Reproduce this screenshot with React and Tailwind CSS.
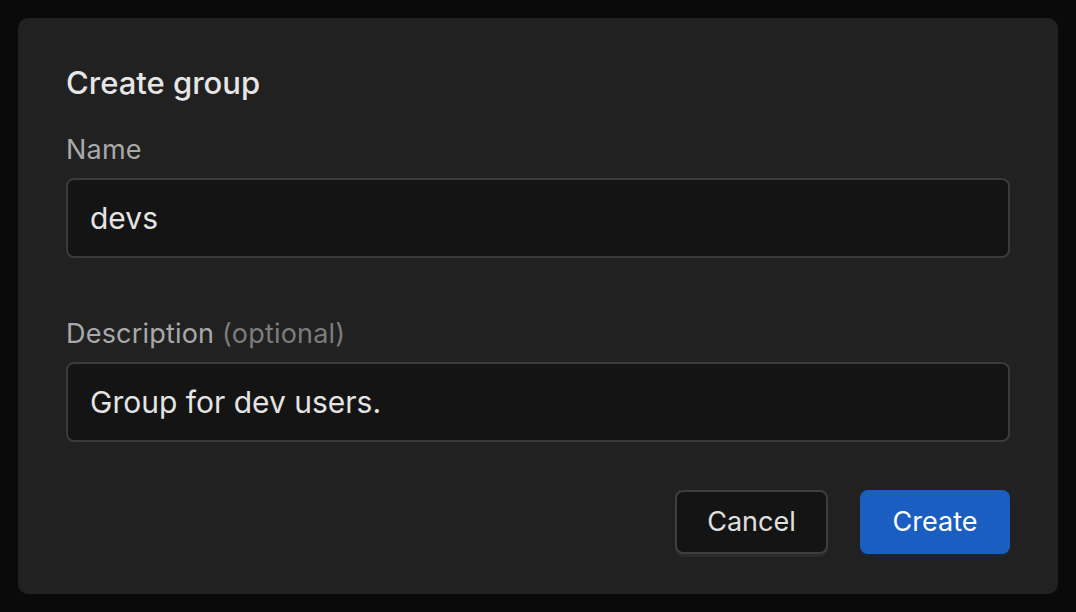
export default function App() {
  return (
    <div className="min-h-screen bg-[#0a0a0a] p-[18px]" style={{ fontFamily: 'Inter, "Noto Sans", sans-serif' }}>
      <div className="flex h-[576px] flex-col rounded-[10px] bg-[#212121] px-12 pt-[47px] pb-10">
        <h2 className="h-9 text-[31px] leading-9 font-medium text-[#e6e6e6]">Create group</h2>

        <label className="mt-[35px] h-7 text-[27px] leading-7 tracking-[0.2px] text-[#a9a9a9]">Name</label>
        <div className="mt-[14px] flex h-20 items-center rounded-[8px] border-2 border-[#3b3b3b] bg-[#141414] px-[22px] text-[30px] text-[#e4e4e4]">
          devs
        </div>

        <label className="mt-[62px] h-7 text-[27px] leading-7 tracking-[0.2px] text-[#a9a9a9]">
          Description <span className="text-[#7c7c7c]">(optional)</span>
        </label>
        <div className="mt-[14px] flex h-20 items-center rounded-[8px] border-2 border-[#3b3b3b] bg-[#141414] px-[22px] text-[30px] text-[#e4e4e4]">
          Group for dev users.
        </div>

        <div className="mt-12 flex justify-end gap-8">
          <button className="h-16 w-[153px] rounded-[8px] border-2 border-[#3e3e3e] bg-[#141414] text-[27px] text-[#e0e0e0] shadow-[0_3px_0_#2a2a2a]">
            Cancel
          </button>
          <button className="h-16 w-[150px] rounded-[8px] bg-[#195ec0] text-[27px] text-white shadow-[0_3px_0_#1b2538]">
            Create
          </button>
        </div>
      </div>
    </div>
  )
}
